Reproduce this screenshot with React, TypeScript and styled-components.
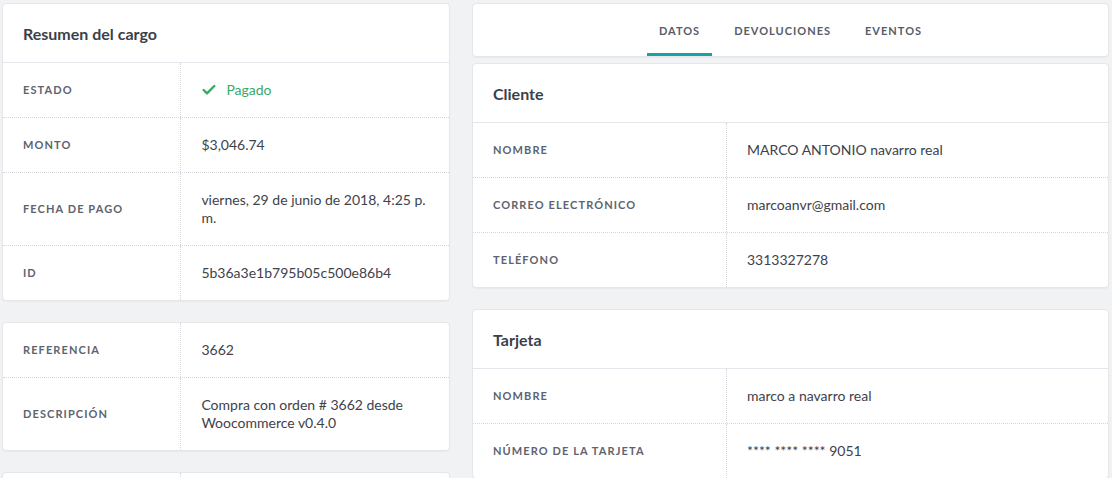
import React from 'react'
import styled, { createGlobalStyle } from 'styled-components'
import { Check } from 'lucide-react'

const GlobalStyle = createGlobalStyle`
  html, body {
    margin: 0;
    padding: 0;
    background: #f1f2f4;
    font-family: Lato, 'Noto Sans', sans-serif;
    -webkit-font-smoothing: antialiased;
  }
`

interface IRow {
  label: string
  value: React.ReactNode
}

const Page = styled.div`
  display: grid;
  grid-template-columns: 448px 1fr;
  column-gap: 22px;
  padding: 3px 3px 0 2px;
  height: 475px;
  overflow: hidden;
  align-items: start;
`

const Column = styled.div<{ $gap: number }>`
  display: flex;
  flex-direction: column;
  gap: ${(p) => p.$gap}px;
`

const Card = styled.section`
  background: #fff;
  border: 1px solid #e4e6ea;
  border-radius: 4px;
  box-shadow: 0 1px 1px rgba(40, 50, 70, 0.04);
  overflow: hidden;
`

const CardHeader = styled.h2`
  margin: 0;
  height: 58px;
  display: flex;
  align-items: center;
  padding: 0 20px;
  font-size: 16px;
  font-weight: 700;
  color: #3b3f4a;
  border-bottom: 1px solid #e3e6ea;
`

const Row = styled.div`
  display: grid;
  grid-template-columns: 40% 60%;
  & + & {
    border-top: 1px dotted #d3d6db;
  }
`

const Label = styled.div`
  display: flex;
  align-items: center;
  padding: 18px 20px;
  font-size: 11px;
  font-weight: 700;
  letter-spacing: 1.1px;
  text-transform: uppercase;
  color: #5e636f;
  border-right: 1px dotted #d3d6db;
  line-height: 18px;
`

const Value = styled.div`
  display: flex;
  align-items: center;
  padding: 18px 22px 18px 20px;
  font-size: 14px;
  line-height: 18px;
  color: #3d424c;
`

const Status = styled.span`
  display: inline-flex;
  align-items: center;
  gap: 9px;
  color: #3aa864;
`

const Tabs = styled.nav`
  display: flex;
  justify-content: center;
  gap: 10px;
  height: 52px;
`

const Tab = styled.div<{ $active?: boolean }>`
  display: flex;
  align-items: center;
  padding: 3px 12px 0;
  font-size: 11px;
  font-weight: 700;
  letter-spacing: 1px;
  color: #575c68;
  border-bottom: 3px solid ${(p) => (p.$active ? '#17a2a8' : 'transparent')};
`

const DetailCard = ({ title, rows }: { title?: string; rows: IRow[] }) => (
  <Card>
    {title && <CardHeader>{title}</CardHeader>}
    {rows.map((r) => (
      <Row key={r.label}>
        <Label>{r.label}</Label>
        <Value>{r.value}</Value>
      </Row>
    ))}
  </Card>
)

export default function App() {
  return (
    <>
      <GlobalStyle />
      <Page>
        <Column $gap={21}>
          <DetailCard
            title="Resumen del cargo"
            rows={[
              {
                label: 'Estado',
                value: (
                  <Status>
                    <Check size={16} strokeWidth={3.6} />
                    Pagado
                  </Status>
                ),
              },
              { label: 'Monto', value: '$3,046.74' },
              {
                label: 'Fecha de pago',
                value: 'viernes, 29 de junio de 2018, 4:25 p. m.',
              },
              { label: 'ID', value: '5b36a3e1b795b05c500e86b4' },
            ]}
          />
          <DetailCard
            rows={[
              { label: 'Referencia', value: '3662' },
              {
                label: 'Descripción',
                value: 'Compra con orden # 3662 desde Woocommerce v0.4.0',
              },
            ]}
          />
          <DetailCard rows={[{ label: 'Moneda', value: 'MXN' }]} />
        </Column>
        <Column $gap={0}>
          <Card>
            <Tabs>
              <Tab $active>DATOS</Tab>
              <Tab>DEVOLUCIONES</Tab>
              <Tab>EVENTOS</Tab>
            </Tabs>
          </Card>
          <Column $gap={21} style={{ marginTop: 6 }}>
            <DetailCard
              title="Cliente"
              rows={[
                { label: 'Nombre', value: 'MARCO ANTONIO navarro real' },
                { label: 'Correo electrónico', value: 'marcoanvr@gmail.com' },
                { label: 'Teléfono', value: '3313327278' },
              ]}
            />
            <DetailCard
              title="Tarjeta"
              rows={[
                { label: 'Nombre', value: 'marco a navarro real' },
                { label: 'Número de la tarjeta', value: '**** **** **** 9051' },
              ]}
            />
          </Column>
        </Column>
      </Page>
    </>
  )
}
